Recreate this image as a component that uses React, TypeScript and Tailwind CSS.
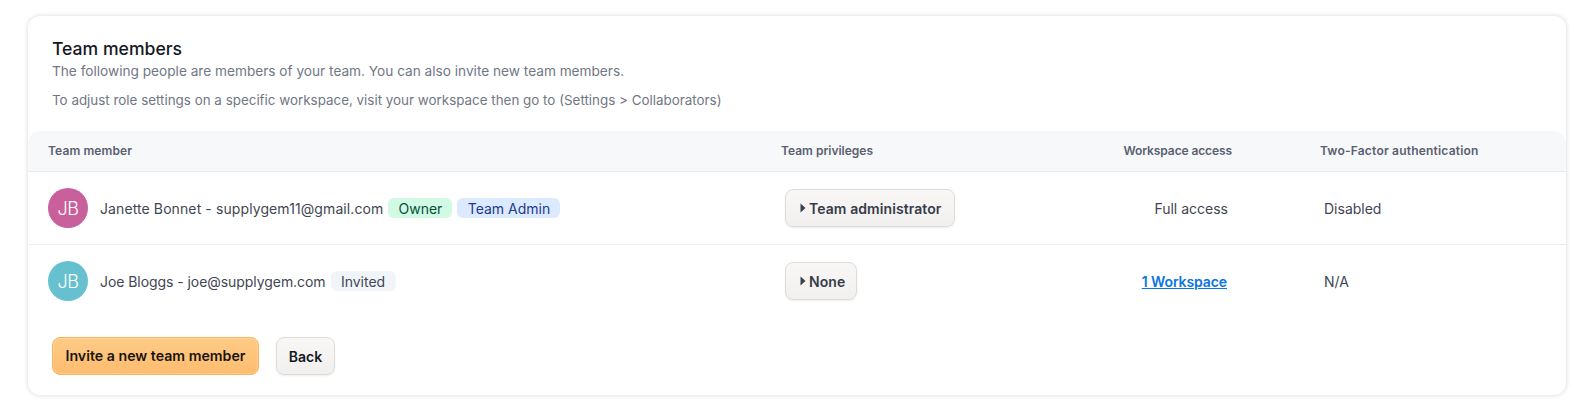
const FONT = "font-['Inter','Liberation_Sans',sans-serif]";

function Caret() {
  return (
    <svg width="6" height="10" viewBox="0 0 6 10" className="mr-[3px] shrink-0">
      <path d="M0.5 0.5 L5.5 5 L0.5 9.5 Z" fill="#3a3f4b" />
    </svg>
  );
}

function Avatar({ color }: { color: string }) {
  return (
    <div className={`w-10 h-10 rounded-full flex items-center justify-center text-white text-[18px] font-light tracking-[-0.5px] shrink-0 ${color}`}>
      JB
    </div>
  );
}

function PrivButton({ label, w }: { label: string; w: string }) {
  return (
    <button className={`h-[38px] ${w} flex items-center pl-[14px] rounded-[8px] border border-[#e0dcd8] bg-gradient-to-b from-[#f8f7f6] to-[#f2f0ef] shadow-[0_1px_2px_rgba(0,0,0,0.08)] text-[14px] tracking-[0.08px] font-semibold text-[#373c49] whitespace-nowrap`}>
      <Caret />
      {label}
    </button>
  );
}

export default function App() {
  return (
    <div className={`h-[415px] bg-white pt-4 pl-[28px] ${FONT}`}>
      <div className="h-[379px] w-[1538px] rounded-[12px] bg-white shadow-[0_0_5px_rgba(0,0,0,0.16)] flex flex-col">
        <div className="pt-[23px] pl-[24px] h-[115px]">
          <h1 className="text-[17.6px] leading-[20px] font-medium text-[#15181f]">Team members</h1>
          <p className="mt-[3px] text-[13.65px] leading-[18px] text-[#717784]">
            The following people are members of your team. You can also invite new team members.
          </p>
          <p className="mt-[11px] text-[13.4px] leading-[18px] text-[#717784]">
            To adjust role settings on a specific workspace, visit your workspace then go to (Settings &gt; Collaborators)
          </p>
        </div>

        <div className="grid grid-cols-[734px_338px_132px_1fr] items-center h-[41px] bg-[#f7f8fa] rounded-t-[12px] border-b border-[#e9ebef] text-[12px] font-semibold text-[#5a6070]">
          <div className="pl-5 tracking-[0.1px]">Team member</div>
          <div className="pl-[19px]">Team privileges</div>
          <div className="text-right whitespace-nowrap tracking-[-0.1px]">Workspace access</div>
          <div className="pl-[88px] whitespace-nowrap tracking-[0.2px]">Two-Factor authentication</div>
        </div>

        <div className="grid grid-cols-[734px_338px_132px_1fr] items-center h-[73px] border-b border-[#eceef1] text-[14px] text-[#3f4654]">
          <div className="pl-5 flex items-center">
            <Avatar color="bg-[#c9609b]" />
            <span className="ml-3 whitespace-nowrap tracking-[0.1px]">Janette Bonnet - supplygem11@gmail.com</span>
            <span className="ml-[5px] h-5 w-[64px] justify-center flex items-center rounded-[6px] bg-[#d1fae5] text-[#064e3b]">Owner</span>
            <span className="ml-[5px] h-5 w-[103px] justify-center flex items-center rounded-[6px] bg-[#dbeafe] text-[#1e3a8a]">Team Admin</span>
          </div>
          <div className="pl-[23px]"><PrivButton label="Team administrator" w="w-[170px]" /></div>
          <div className="pr-1 text-right whitespace-nowrap">Full access</div>
          <div className="pl-[92px]">Disabled</div>
        </div>

        <div className="grid grid-cols-[734px_338px_132px_1fr] items-center h-[72px] text-[14px] text-[#3f4654]">
          <div className="pl-5 flex items-center">
            <Avatar color="bg-[#66c0cf]" />
            <span className="ml-3 whitespace-nowrap tracking-[-0.06px]">Joe Bloggs - joe@supplygem.com</span>
            <span className="ml-[5px] h-5 w-[65px] justify-center flex items-center rounded-[6px] bg-[#f1f5f9] text-[#3f4654]">Invited</span>
          </div>
          <div className="pl-[23px]"><PrivButton label="None" w="w-[72px]" /></div>
          <div className="pr-[5px] text-right whitespace-nowrap font-semibold text-[#0b74de] underline tracking-[-0.1px]">1 Workspace</div>
          <div className="pl-[92px]">N/A</div>
        </div>

        <div className="flex items-center pl-[24px] mt-[20px] gap-[17px]">
          <button className="h-[38px] w-[207px] rounded-[8px] border border-[#fbb260] bg-gradient-to-b from-[#fecb85] to-[#fdbc6f] shadow-[inset_0_0_0_1px_rgba(255,255,255,0.22)] text-[14.2px] font-semibold text-[#1a1410] whitespace-nowrap">
            Invite a new team member
          </button>
          <button className="h-[38px] w-[59px] rounded-[8px] border border-[#e0dcd8] bg-gradient-to-b from-[#f8f7f6] to-[#f2f0ef] shadow-[0_1px_2px_rgba(0,0,0,0.08)] text-[14px] font-semibold text-[#15181f]">
            Back
          </button>
        </div>
      </div>
    </div>
  );
}
